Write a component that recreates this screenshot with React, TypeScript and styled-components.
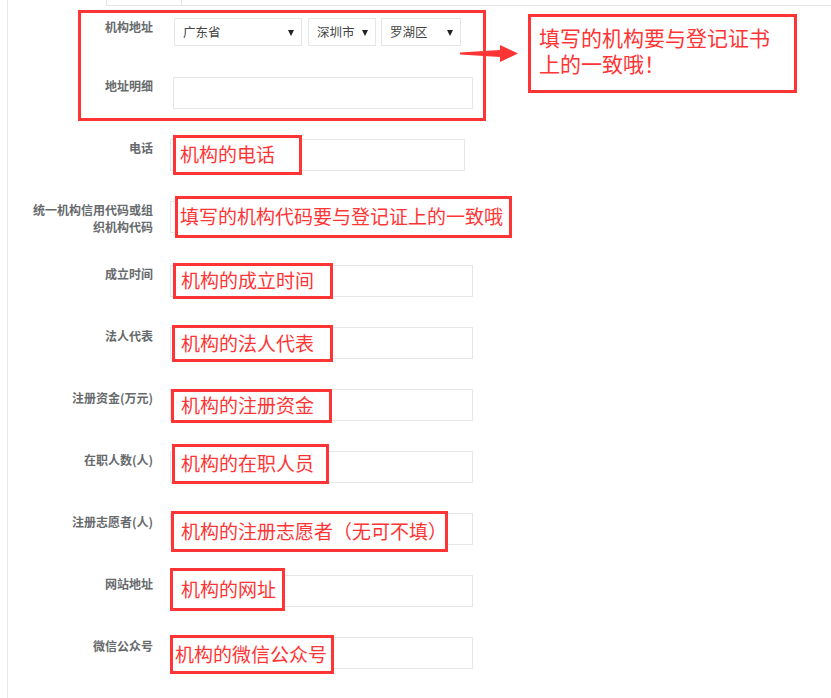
import React from 'react';
import styled, { createGlobalStyle } from 'styled-components';

type Mark = { left: number; top: number; width: number; height: number; pad: number };

type Row = { label: string; hint: string; width?: number; mark: Mark };

const rows: Row[] = [
  { label: '电话', hint: '机构的电话', width: 295, mark: { left: 3, top: -4, width: 129, height: 40, pad: 4 } },
  {
    label: '统一机构信用代码或组织机构代码',
    hint: '填写的机构代码要与登记证上的一致哦',
    mark: { left: 5, top: -5, width: 337, height: 42, pad: 2 },
  },
  { label: '成立时间', hint: '机构的成立时间', mark: { left: 3, top: -2, width: 160, height: 36, pad: 5 } },
  { label: '法人代表', hint: '机构的法人代表', mark: { left: 2, top: -2, width: 161, height: 37, pad: 6 } },
  { label: '注册资金(万元)', hint: '机构的注册资金', mark: { left: 1, top: 0, width: 161, height: 34, pad: 7 } },
  { label: '在职人数(人)', hint: '机构的在职人员', mark: { left: 2, top: -7, width: 157, height: 40, pad: 6 } },
  {
    label: '注册志愿者(人)',
    hint: '机构的注册志愿者（无可不填）',
    mark: { left: 1, top: -2, width: 277, height: 41, pad: 7 },
  },
  { label: '网站地址', hint: '机构的网址', mark: { left: 0, top: -7, width: 115, height: 43, pad: 8 } },
  { label: '微信公众号', hint: '机构的微信公众号', mark: { left: 0, top: -2, width: 164, height: 39, pad: 2 } },
];

const GlobalStyle = createGlobalStyle`
  html, body {
    margin: 0;
    background: #ffffff;
  }
  body {
    font-family: "Noto Sans CJK SC", "Noto Sans", sans-serif;
  }
`;

const RED = '#ff3535';

export default function App() {
  return (
    <>
      <GlobalStyle />
      <Panel>
        <TopStrip>
          <StripCell />
          <StripRest />
        </TopStrip>
        <Form>
          <AddressBlock>
            <FormRow $gap={31}>
              <Label>机构地址</Label>
              <SelectGroup>
                <SelectBox $width={128}>广东省</SelectBox>
                <SelectBox $width={68}>深圳市</SelectBox>
                <SelectBox $width={80}>罗湖区</SelectBox>
              </SelectGroup>
            </FormRow>
            <FormRow>
              <Label>地址明细</Label>
              <InputCell>
                <InputBox $width={300} $shift={3} />
              </InputCell>
            </FormRow>
            <Outline />
            <Arrow viewBox="0 0 62 22" width="62" height="22">
              <polygon points="2,9.5 42,7 42,2 60,10.5 42,19 42,14 2,11.5" fill={RED} />
            </Arrow>
            <Note>
              <NoteLine>填写的机构要与登记证书</NoteLine>
              <NoteLine>上的一致哦！</NoteLine>
            </Note>
          </AddressBlock>
          {rows.map((row) => (
            <FormRow key={row.label}>
              <Label>{row.label}</Label>
              <InputCell>
                <InputBox $width={row.width ?? 303} />
                <Hint
                  $pad={row.mark.pad}
                  style={{
                    left: row.mark.left,
                    top: row.mark.top,
                    width: row.mark.width,
                    height: row.mark.height,
                  }}
                >
                  {row.hint}
                </Hint>
              </InputCell>
            </FormRow>
          ))}
        </Form>
      </Panel>
    </>
  );
}

const Panel = styled.div`
  margin-left: 7px;
  border-left: 1px solid #e7eaec;
  min-height: 698px;
  box-sizing: border-box;
`;

const TopStrip = styled.div`
  display: flex;
  height: 6px;
  margin-left: 98px;
`;

const StripCell = styled.div`
  width: 76px;
  box-sizing: border-box;
  border: 1px solid #e5e6e7;
  border-top: none;
`;

const StripRest = styled.div`
  flex: 1;
  border-bottom: 1px solid #e5e6e7;
`;

const Form = styled.div`
  padding-top: 12px;
`;

const AddressBlock = styled.div`
  position: relative;
`;

const FormRow = styled.div<{ $gap?: number }>`
  display: grid;
  grid-template-columns: 145px 303px;
  column-gap: 17px;
  align-items: start;
  margin-bottom: ${(p) => p.$gap ?? 30}px;
`;

const Label = styled.div`
  padding-left: 23px;
  text-align: right;
  font-size: 12px;
  line-height: 17px;
  font-weight: 700;
  color: #676a6c;
`;

const SelectGroup = styled.div`
  display: flex;
  gap: 6px;
  padding-left: 4px;
  & > :last-child {
    margin-left: -1px;
  }
`;

const SelectBox = styled.div<{ $width: number }>`
  position: relative;
  width: ${(p) => p.$width}px;
  height: 28px;
  box-sizing: border-box;
  border: 1px solid #e5e6e7;
  padding-left: 8px;
  font-size: 12.5px;
  line-height: 26px;
  color: #444;

  &::after {
    content: '';
    position: absolute;
    right: 7px;
    top: 11px;
    border-left: 3.5px solid transparent;
    border-right: 3.5px solid transparent;
    border-top: 6px solid #222;
  }
`;

const InputCell = styled.div`
  position: relative;
`;

const InputBox = styled.div<{ $width: number; $shift?: number }>`
  width: ${(p) => p.$width}px;
  height: 32px;
  margin-left: ${(p) => p.$shift ?? 0}px;
  box-sizing: border-box;
  border: 1px solid #e5e6e7;
  background: #fff;
`;

const Hint = styled.div<{ $pad: number }>`
  position: absolute;
  box-sizing: border-box;
  display: flex;
  align-items: center;
  padding: 0 0 3px ${(p) => p.$pad}px;
  border: 3px solid ${RED};
  background: #fff;
  color: ${RED};
  font-size: 19px;
  white-space: nowrap;
`;

const Outline = styled.div`
  position: absolute;
  left: 70px;
  top: -8px;
  width: 408px;
  height: 111px;
  box-sizing: border-box;
  border: 3px solid ${RED};
  pointer-events: none;
`;

const Arrow = styled.svg`
  position: absolute;
  left: 450px;
  top: 25px;
`;

const Note = styled.div`
  position: absolute;
  left: 520px;
  top: -4px;
  width: 269px;
  height: 79px;
  box-sizing: border-box;
  border: 3px solid ${RED};
  padding: 7px 0 0 8px;
  color: ${RED};
  font-size: 21px;
`;

const NoteLine = styled.div`
  line-height: 26px;
  white-space: nowrap;
`;
